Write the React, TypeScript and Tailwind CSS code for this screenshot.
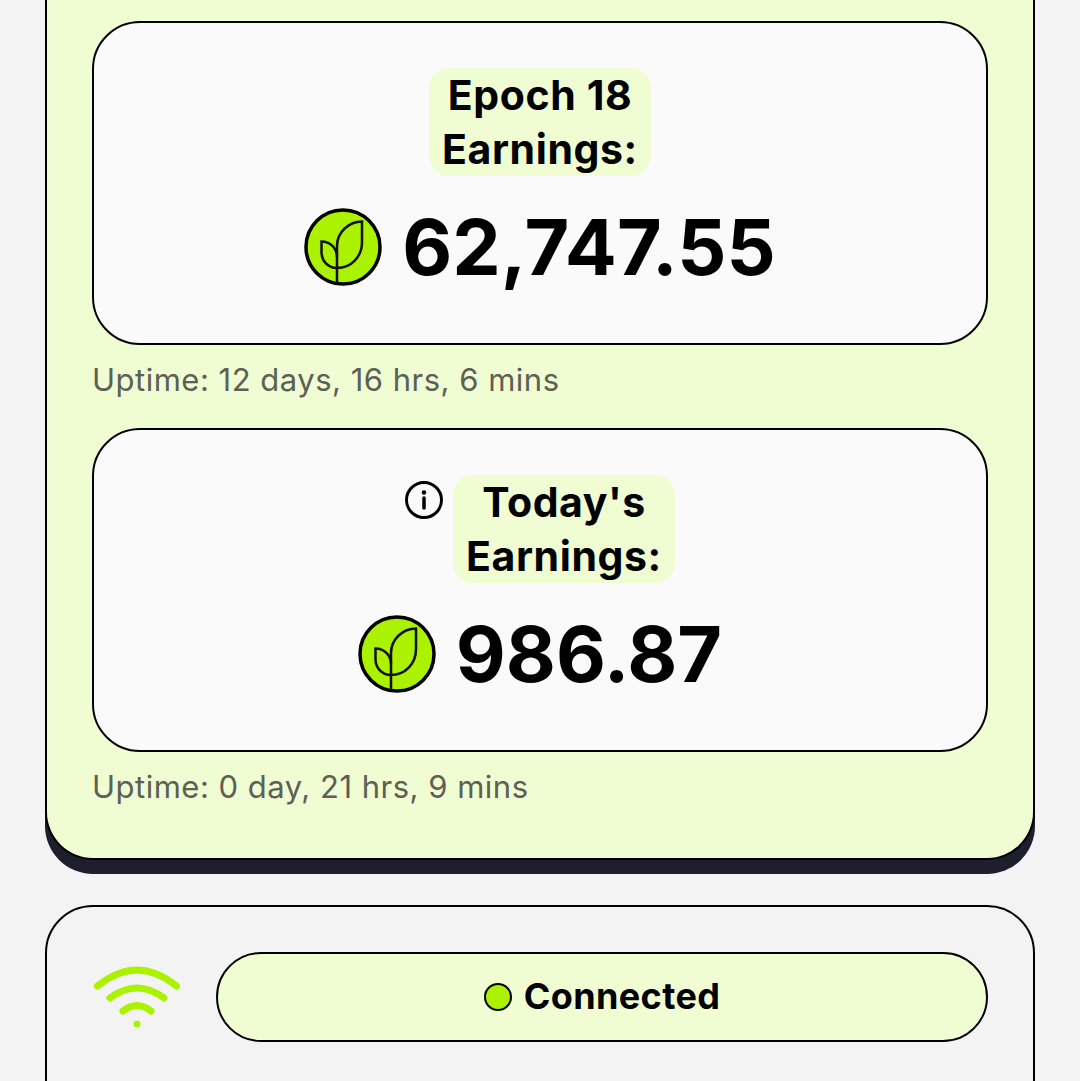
function Coin() {
    return (
        <svg width="78" height="78" viewBox="0 0 78 78" fill="none" className="shrink-0">
            <circle cx="39" cy="39" r="37" fill="#aaf200" stroke="#000" strokeWidth="3.5" />
            <path d="M33 75V38C33 24 45 13.5 58 13.5V34C58 49 47 60 33 60" stroke="#111" strokeWidth="2.5" />
            <path d="M33 60C24 60 17.5 53 17.5 44V33.5C26 33.5 33 40 33 49" stroke="#111" strokeWidth="2.5" />
        </svg>
    )
}

function InfoIcon() {
    return (
        <svg width="38" height="38" viewBox="0 0 38 38" fill="none" className="shrink-0 mt-[6px] mr-[10px]">
            <circle cx="19" cy="19" r="17.5" stroke="#000" strokeWidth="3" />
            <circle cx="19" cy="11.5" r="2.2" fill="#000" />
            <path d="M19 17V27" stroke="#000" strokeWidth="3.5" strokeLinecap="round" />
        </svg>
    )
}

function WifiIcon() {
    return (
        <svg width="86" height="62" viewBox="0 0 86 62" fill="none" className="shrink-0">
            <path d="M3.5 20Q43 -12 82.500 20" stroke="#aaf200" strokeWidth="7" strokeLinecap="round" />
            <path d="M16 32Q43 12 70 32" stroke="#aaf200" strokeWidth="7" strokeLinecap="round" />
            <path d="M29 45Q43 34 57 45" stroke="#aaf200" strokeWidth="7" strokeLinecap="round" />
            <circle cx="43" cy="58" r="3.5" fill="#aaf200" />
        </svg>
    )
}

function EarningsCard({ line1, line2, amount, info }: { line1: string; line2: string; amount: string; info?: boolean }) {
    return (
        <div className="h-[324px] rounded-[48px] border-2 border-black bg-[#fafafa] flex flex-col items-center pt-[45px]">
            <div className="flex items-start">
                {info && <InfoIcon />}
                <div className="w-[222px] rounded-[20px] bg-[#f0fcd2] text-center text-[41px] leading-[54px] font-bold text-black tracking-[0.6px]">
                    <p>{line1}</p>
                    <p>{line2}</p>
                </div>
            </div>
            <div className="flex items-center gap-[20px] mt-[32px]">
                <Coin />
                <span className="text-[77px] leading-[78px] font-bold text-black">{amount}</span>
            </div>
        </div>
    )
}

export default function App() {
    return (
        <div className="h-[1081px] overflow-hidden bg-[#f3f3f3] px-[45px] font-['Inter','Noto_Sans',sans-serif]">
            <div className="h-[860px] rounded-b-[48px] border-2 border-t-0 border-black bg-[#f0fcd2] px-[45px] pt-[21px] shadow-[0_14px_0_#1e1e2c]">
                <EarningsCard line1="Epoch 18" line2="Earnings:" amount="62,747.55" />
                <p className="mt-[17px] mb-[30px] text-[31px] leading-[36px] text-[#5c6055] tracking-[0.5px]">Uptime: 12 days, 16 hrs, 6 mins</p>
                <EarningsCard line1="Today's" line2="Earnings:" amount="986.87" info />
                <p className="mt-[17px] text-[31px] leading-[36px] text-[#5c6055] tracking-[0.5px]">Uptime: 0 day, 21 hrs, 9 mins</p>
            </div>

            <div className="mt-[45px] h-[300px] rounded-[48px] border-2 border-black bg-[#f3f3f3] pl-[47px] pr-[45px] pt-[45px]">
                <div className="flex items-center gap-[36px]">
                    <WifiIcon />
                    <div className="flex-1 h-[90px] rounded-[45px] border-2 border-black bg-[#f0fcd2] flex items-center justify-center gap-[12px]">
                        <span className="w-[28px] h-[28px] rounded-full border-2 border-black bg-[#aaf200]"></span>
                        <span className="text-[36px] leading-[40px] font-bold text-black tracking-[0.4px] -mt-[2px]">Connected</span>
                    </div>
                </div>
            </div>
        </div>
    )
}
